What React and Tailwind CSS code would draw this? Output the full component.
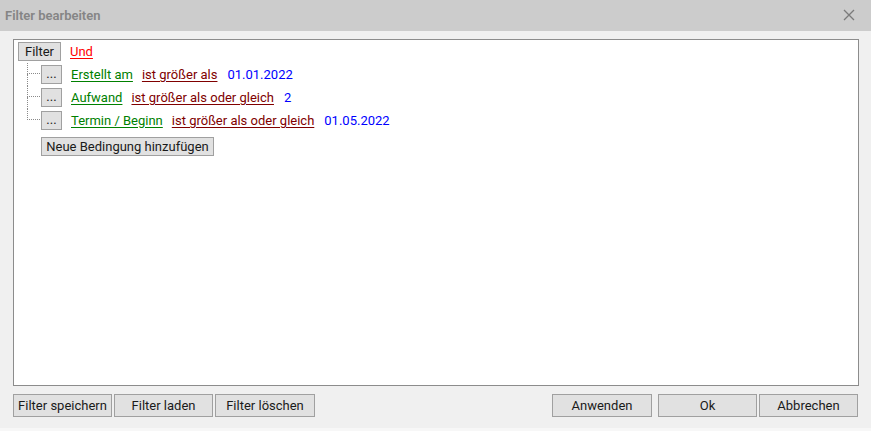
import React from "react";

const font = { fontFamily: "Roboto, 'Liberation Sans', sans-serif" };

function Btn({ children, className = "" }) {
  return (
    <div
      className={
        "flex items-center justify-center border border-[#a0a0a0] bg-[#e1e1e1] text-[13px] text-[#1a1a1a] leading-none " +
        className
      }
    >
      {children}
    </div>
  );
}

function Row({ last, field, op, value }) {
  return (
    <div className="flex h-[23px] items-center">
      <div className="flex h-full w-[23px] flex-col">
        <div className="ml-[9px] h-[11px] w-[13px] border-b border-l border-dotted border-[#8a8a8a]" />
        {!last && <div className="ml-[9px] flex-1 border-l border-dotted border-[#8a8a8a]" />}
      </div>
      <Btn className="h-[19px] w-[21px] text-[10px] pb-[3px]">...</Btn>
      <span className="ml-[9px] text-[13px] text-[#008000] underline underline-offset-2">{field}</span>
      <span className="ml-[9px] text-[13px] text-[#800000] underline underline-offset-2">{op}</span>
      <span className="ml-[10px] text-[13px] text-[#0000ff]">{value}</span>
    </div>
  );
}

export default function App() {
  return (
    <div style={font} className="flex h-[431px] w-[871px] flex-col bg-[#f0f0f0]">
      <div className="flex h-[31px] shrink-0 items-center justify-between bg-[#cccccc] pl-[5px] pr-[16px]">
        <span className="text-[13px] font-semibold text-[#858585]">Filter bearbeiten</span>
        <svg width="12" height="12" viewBox="0 0 12 12" className="mt-[-1px]">
          <path d="M1 1 L11 11 M11 1 L1 11" stroke="#7a7a7a" strokeWidth="1.3" />
        </svg>
      </div>
      <div className="flex flex-1 flex-col pl-[13px] pr-[12px] pt-[8px]">
        <div className="h-[347px] w-[846px] border border-[#8c8c8c] bg-white pl-[4px]">
          <div className="flex h-[23px] items-center">
            <Btn className="h-[19px] w-[43px]">Filter</Btn>
            <span className="ml-[9px] text-[13px] text-[#ff0000] underline underline-offset-2">Und</span>
          </div>
          <Row field="Erstellt am" op="ist größer als" value="01.01.2022" />
          <Row field="Aufwand" op="ist größer als oder gleich" value="2" />
          <Row last field="Termin / Beginn" op="ist größer als oder gleich" value="01.05.2022" />
          <div className="mt-[3px] flex h-[23px] items-center pl-[23px]">
            <Btn className="h-[19px] w-[173px]">Neue Bedingung hinzufügen</Btn>
          </div>
        </div>
        <div className="mt-[8px] flex w-[846px] items-center">
          <div className="flex gap-[2px]">
            <Btn className="h-[23px] w-[99px]">Filter speichern</Btn>
            <Btn className="h-[23px] w-[99px]">Filter laden</Btn>
            <Btn className="h-[23px] w-[100px]">Filter löschen</Btn>
          </div>
          <div className="ml-auto mr-[1px] flex">
            <Btn className="h-[23px] w-[100px]">Anwenden</Btn>
            <Btn className="ml-[6px] h-[23px] w-[99px]">Ok</Btn>
            <Btn className="ml-[2px] h-[23px] w-[99px]">Abbrechen</Btn>
          </div>
        </div>
      </div>
      <div className="h-[3px] shrink-0 bg-[#f7f7f7]" />
    </div>
  );
}
